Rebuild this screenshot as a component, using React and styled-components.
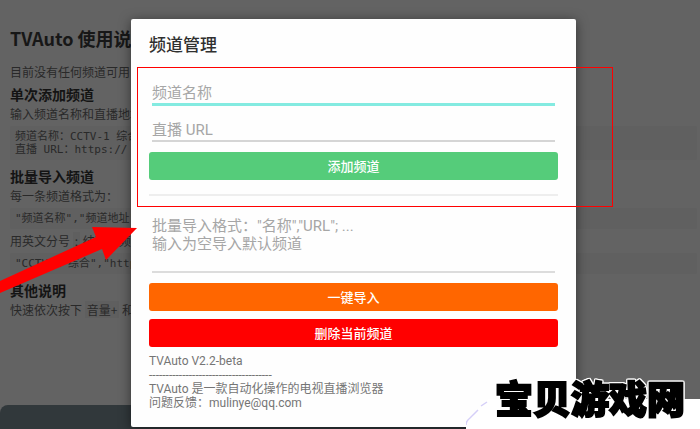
import React from 'react';
import styled, { createGlobalStyle } from 'styled-components';

const GlobalStyle = createGlobalStyle`
  * {
    box-sizing: border-box;
  }

  body {
    margin: 0;
    background: #636363;
    font-family: Roboto, "Noto Sans CJK SC", sans-serif;
  }
`;

const Page = styled.div`
  position: relative;
  display: flex;
  flex-direction: column;
  min-height: 100vh;
  overflow: hidden;
`;

const Guide = styled.main`
  flex: 1;
  padding: 26px 3px 0 10px;
  color: #292929;
  font-family: "Noto Sans CJK SC", sans-serif;
  white-space: nowrap;
`;

const GuideTitle = styled.h1`
  margin: 0 0 12px;
  color: #171717;
  font-size: 18px;
  line-height: 24px;
`;

const GuideText = styled.p`
  margin: 0;
  font-size: 12px;
  line-height: 20px;
`;

const CodeBlock = styled.pre`
  margin: 2px 0;
  padding: 4px 5px;
  border-radius: 2px;
  background: #606060;
  font-family: "DejaVu Sans Mono", "Noto Sans CJK SC", monospace;
  font-size: 11px;
  line-height: 13px;
`;

const GuideHeading = styled.h2`
  margin: 2px 0 0;
  color: #141414;
  font-size: 14px;
  line-height: 20px;

  ${CodeBlock} + & {
    margin-top: 6px;
  }
`;

const Key = styled.code`
  padding: 0 2px;
  background: #5f5f5f;
  font-family: "Noto Sans CJK SC", monospace;
`;

const BottomBar = styled.div`
  height: 24px;
  border-radius: 8px 8px 0 0;
  background: #31383b;
`;

const Overlay = styled.div`
  position: absolute;
  inset: 0;
  padding: 19px 124px 2px 131px;
`;

const Dialog = styled.section`
  display: flex;
  flex-direction: column;
  height: 100%;
  padding: 14px 18px 0;
  border-radius: 2px;
  background: #fefefe;
  box-shadow: 0 2px 12px rgba(0, 0, 0, 0.5);
`;

const DialogTitle = styled.h2`
  margin: 0 0 24px;
  color: #303030;
  font-size: 17px;
  font-weight: 500;
  line-height: 24px;
`;

const Form = styled.form`
  display: flex;
  flex-direction: column;
`;

const fieldStyle = `
  display: block;
  margin: 0 3px;
  padding: 0;
  border: 0;
  border-radius: 0;
  outline: 0;
  background: transparent;
  color: #333;
  font-family: Roboto, "Noto Sans CJK SC", sans-serif;
  font-size: 15px;
  resize: none;

  &::placeholder {
    color: #a6a6a6;
    opacity: 1;
  }
`;

const Input = styled.input`
  ${fieldStyle}
  height: ${({ $active }) => $active ? '25px' : '24px'};
  margin-top: ${({ $active }) => $active ? '0' : '12px'};
  padding-top: 2px;
  border-bottom: ${({ $active }) => $active ? '3px solid #84ebe1' : '2px solid #d5d5d5'};
`;

const Textarea = styled.textarea`
  ${fieldStyle}
  height: 57px;
  padding-top: 1px;
  border-bottom: 2px solid #dcdcdc;
  line-height: 18px;
`;

const Button = styled.button`
  height: 28px;
  margin-top: ${({ $gap }) => $gap}px;
  padding: 0;
  border: 0;
  border-radius: 3px;
  background: ${({ $color }) => $color};
  color: #fff;
  font-family: "Noto Sans CJK SC", sans-serif;
  font-size: 13px;
  font-weight: 500;
  line-height: 28px;
`;

const Divider = styled.hr`
  width: 100%;
  height: 2px;
  margin: 14px 0 20px;
  border: 0;
  background: #eee;
`;

const About = styled.div`
  margin-top: 7px;
  color: #757575;
  font-size: 12px;
  line-height: 14px;
  white-space: nowrap;

  p {
    margin: 0;
  }
`;

const Highlight = styled.div`
  position: absolute;
  top: 67px;
  right: 87px;
  left: 137px;
  height: 140px;
  border: 1px solid #f00;
  pointer-events: none;
`;

const Arrow = styled.svg`
  position: absolute;
  top: 226px;
  left: 0;
  pointer-events: none;
`;

const Brand = styled.div`
  position: absolute;
  right: 0;
  bottom: 0;
  width: 234px;
  height: 60px;
  pointer-events: none;
`;

const BrandPlate = styled.svg`
  position: absolute;
  right: 0;
  bottom: 0;
`;

const BrandName = styled.strong`
  position: absolute;
  right: 15px;
  bottom: 8px;
  color: #000;
  font-family: "Noto Sans CJK SC", sans-serif;
  font-size: 38px;
  font-weight: 900;
  line-height: 48px;
  white-space: nowrap;
  -webkit-text-stroke: 2px #000;
  filter: drop-shadow(1px 0 #fff) drop-shadow(-1px 0 #fff) drop-shadow(0 1px #fff) drop-shadow(0 -1px #fff);
`;

const UserGuide = () => (
  <Guide>
    <GuideTitle>TVAuto 使用说明</GuideTitle>
    <GuideText>目前没有任何频道可用</GuideText>
    <GuideHeading>单次添加频道</GuideHeading>
    <GuideText>输入频道名称和直播地址</GuideText>
    <CodeBlock>{'频道名称：CCTV-1 综合\n直播 URL：https://'}</CodeBlock>
    <GuideHeading>批量导入频道</GuideHeading>
    <GuideText>每一条频道格式为：</GuideText>
    <CodeBlock>{'"频道名称","频道地址"'}</CodeBlock>
    <GuideText>用英文分号 <Key>;</Key> 结束各频道</GuideText>
    <CodeBlock>{'"CCTV-1 综合","https'}</CodeBlock>
    <GuideHeading>其他说明</GuideHeading>
    <GuideText>快速依次按下 <Key>音量+</Key> 和</GuideText>
  </Guide>
);

const ChannelDialog = () => (
  <Dialog role="dialog" aria-labelledby="dialog-title">
    <DialogTitle id="dialog-title">频道管理</DialogTitle>
    <Form onSubmit={(e) => e.preventDefault()}>
      <Input $active aria-label="频道名称" placeholder="频道名称" />
      <Input aria-label="直播 URL" placeholder="直播 URL" />
      <Button type="submit" $color="#55cc7a" $gap={10}>添加频道</Button>
    </Form>
    <Divider />
    <Textarea
      aria-label="批量导入"
      placeholder={'批量导入格式："名称","URL"; ...\n输入为空导入默认频道'}
    />
    <Button type="button" $color="#ff6600" $gap={10}>一键导入</Button>
    <Button type="button" $color="#ff0000" $gap={8}>删除当前频道</Button>
    <About>
      <p>TVAuto V2.2-beta</p>
      <p>{'-'.repeat(37)}</p>
      <p>TVAuto 是一款自动化操作的电视直播浏览器</p>
      <p>问题反馈：mulinye@qq.com</p>
    </About>
  </Dialog>
);

export default function App() {
  return (
    <>
      <GlobalStyle />
      <Page>
        <UserGuide />
        <BottomBar />
        <Overlay>
          <ChannelDialog />
        </Overlay>
        <Highlight />
        <Arrow width="138" height="68" viewBox="0 0 138 68" aria-hidden="true">
          <path d="M0 55 L96 11 L92 1 L137 2 L106 34 L102 23 L0 67 Z" fill="#f00" />
        </Arrow>
        <Brand>
          <BrandPlate width="234" height="30" viewBox="0 0 234 30" aria-hidden="true">
            <path d="M0 30 V23 L23 0 H234 V30 Z" fill="#fff" />
            <path d="M0 26 Q0 22 4 19 L12 11 M15 7 L21 3" fill="none" stroke="#d5cff8" strokeWidth="1.5" />
          </BrandPlate>
          <BrandName>宝贝游戏网</BrandName>
        </Brand>
      </Page>
    </>
  );
}
